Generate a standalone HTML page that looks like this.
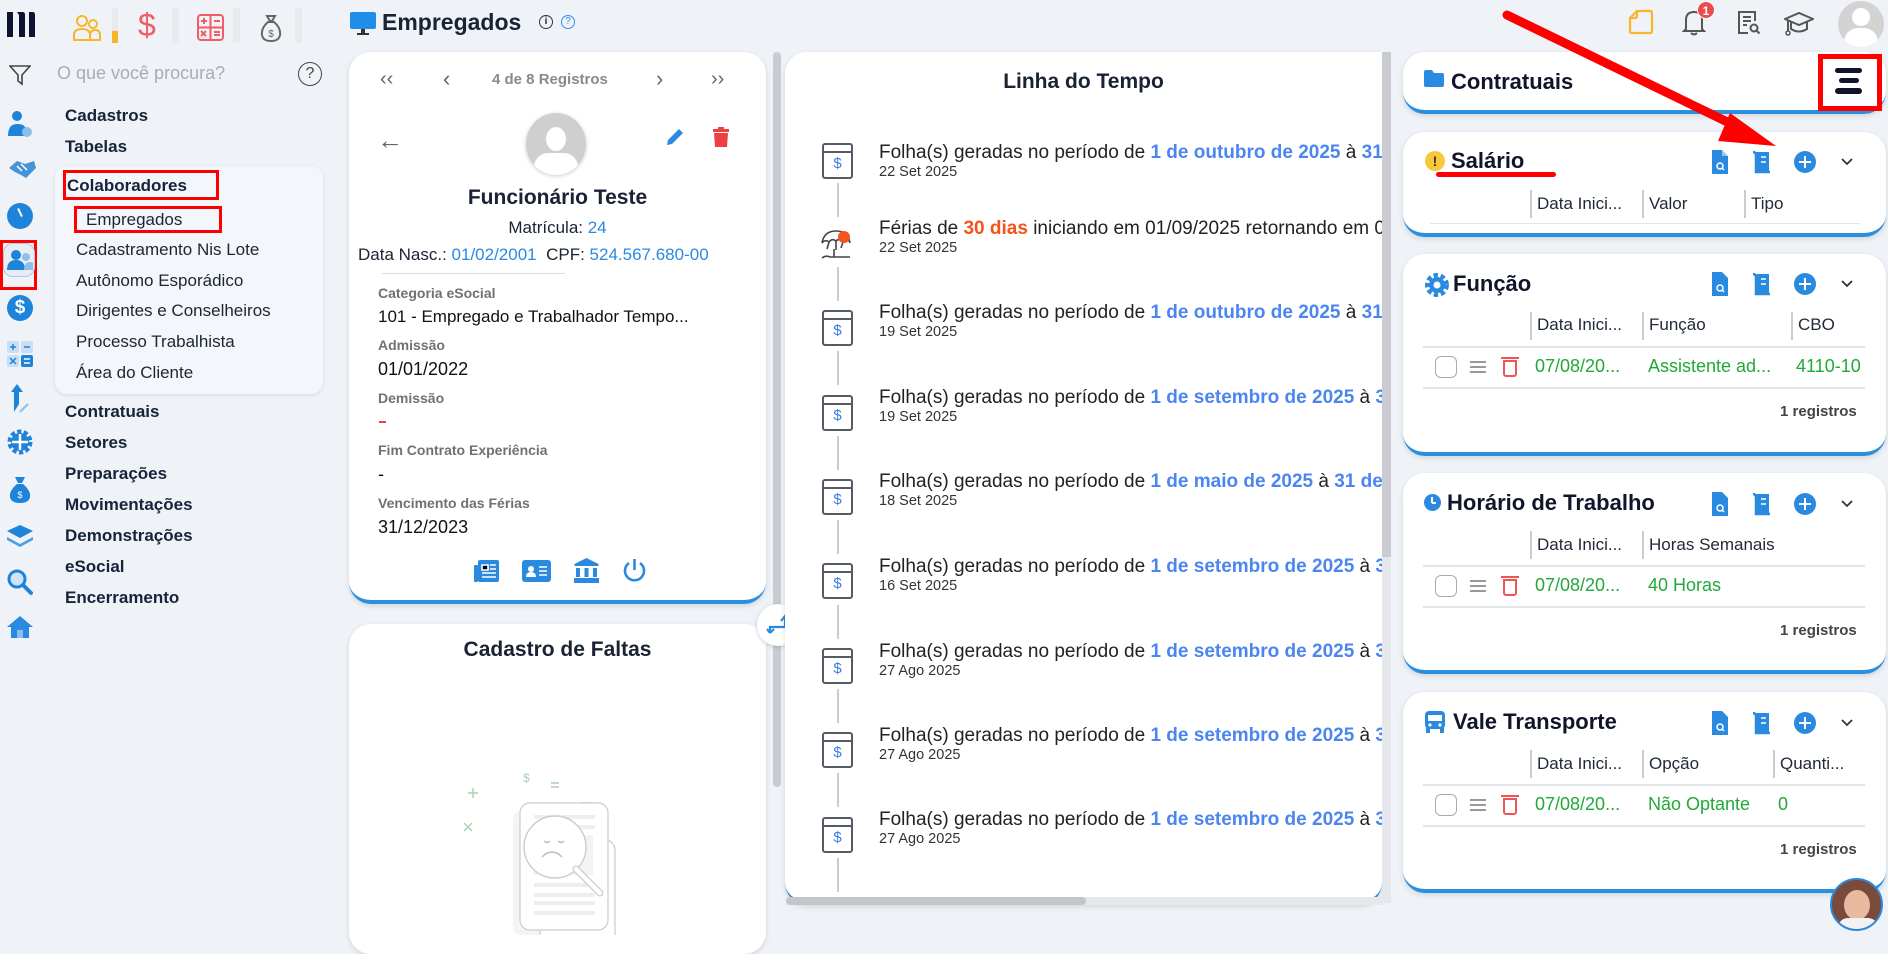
<!DOCTYPE html>
<html><head><meta charset="utf-8">
<style>
*{box-sizing:border-box;margin:0;padding:0}
body{width:1888px;height:933px;overflow:hidden;background:#eff3f8;font-family:"Liberation Sans",sans-serif;color:#1a2233;position:relative}
.a{position:absolute}
.card{position:absolute;background:#fff;border-radius:22px;box-shadow:0 2px 6px rgba(0,0,0,.12);border-bottom:4px solid #2b8fde}
.menu{position:absolute;left:65px;font-weight:bold;font-size:17px;color:#17233a}
.sub{position:absolute;left:76px;font-size:17px;color:#1d2535}
.lbl{position:absolute;left:378px;font-size:14px;font-weight:bold;color:#6e7176}
.val{position:absolute;left:378px;font-size:18px;color:#111}
.ti{position:absolute;left:879px;font-size:19px;color:#222;white-space:nowrap}
.ti b{color:#4b86f0}
.td{position:absolute;left:879px;font-size:14.5px;color:#333}
.ticon{position:absolute;left:822px;width:31px;height:36px;border:2px solid #555c66;border-radius:3px}
.ticon:before{content:"";position:absolute;left:0;right:0;top:6px;border-top:2px solid #555c66}
.ticon:after{content:"$";position:absolute;left:0;right:0;top:10px;text-align:center;color:#3a7de0;font-size:15px}
.tline{position:absolute;left:837px;width:2px;background:#ccc}
.ct{position:absolute;font-weight:bold;font-size:22px;color:#111529}
.hd{position:absolute;font-size:17px;color:#222a38}
.vs{position:absolute;width:2px;height:28px;background:#ccc}
.hl{position:absolute;left:1423px;width:1445px;height:2px;background:#e2e4e8;width:442px}
.gr{position:absolute;font-size:18px;color:#22a83a}
.reg{position:absolute;right:24px;font-size:15px;font-weight:bold;color:#444}
.chk{position:absolute;left:1435px;width:22px;height:22px;border:1.5px solid #aaa;border-radius:6px}
.ham{position:absolute;left:1470px;width:16px;height:12px;border-top:2px solid #999;border-bottom:2px solid #999}
.ham:after{content:"";position:absolute;left:0;right:0;top:3px;border-top:2px solid #999}
.trash{position:absolute;left:1503px;width:14px;height:17px;border:2px solid #f05555;border-radius:0 0 3px 3px}
.trash:before{content:"";position:absolute;left:-4px;right:-4px;top:-5px;border-top:2px solid #f05555}
</style></head><body>

<!-- top bar -->
<svg class="a" style="left:5px;top:10px" width="32" height="32" viewBox="0 0 32 32"><path d="M2 2h6v25H2zM12 2h6q2 0 2 3v22h-6V5zM24 2h4q2 0 2 3v22h-6z" fill="#0e1333"/></svg>
<svg class="a" style="left:72px;top:14px" width="30" height="28" viewBox="0 0 30 28"><g fill="none" stroke="#f9b52a" stroke-width="2"><circle cx="10" cy="7" r="5"/><circle cx="21" cy="10" r="4"/><path d="M2 26v-5q0-6 8-6t8 6v5zM18 26v-4q0-6 5-6t5 5v5z"/></g></svg>
<div class="a" style="left:112px;top:31px;width:6px;height:12px;background:#f9b52a"></div>
<div class="a" style="left:112px;top:8px;width:6px;height:23px;background:#e8eaee"></div>
<div class="a" style="left:138px;top:8px;font-size:32px;color:#f25c66;line-height:34px">$</div>
<div class="a" style="left:172px;top:8px;width:7px;height:35px;background:#e8eaee"></div>
<svg class="a" style="left:197px;top:14px" width="27" height="27" viewBox="0 0 27 27"><rect x="1" y="1" width="25" height="25" rx="3" fill="none" stroke="#f25c66" stroke-width="2"/><path d="M13.5 1v25M1 13.5h25M4 7h6M7 4v6M17 7h6M4 17l5 5M9 17l-5 5M17 18h6M17 21h6" stroke="#f25c66" stroke-width="2"/></svg>
<div class="a" style="left:233px;top:8px;width:7px;height:35px;background:#e8eaee"></div>
<svg class="a" style="left:260px;top:14px" width="22" height="28" viewBox="0 0 22 28"><path d="M7 2h8l-3 5h-2zM8 8q-7 6-6 13 1 6 9 6t9-6q1-7-6-13z" fill="none" stroke="#666" stroke-width="2"/><text x="11" y="23" font-size="10" text-anchor="middle" fill="#666">$</text></svg>
<div class="a" style="left:295px;top:8px;width:7px;height:35px;background:#e8eaee"></div>

<svg class="a" style="left:350px;top:12px" width="26" height="24" viewBox="0 0 26 24"><rect x="0" y="0" width="26" height="17" rx="2" fill="#1e8ee8"/><rect x="11" y="17" width="4" height="5" fill="#333"/><rect x="7" y="21" width="12" height="2" fill="#333"/></svg>
<div class="a" style="left:382px;top:9px;font-size:23px;font-weight:bold;color:#1a2233">Empregados</div>
<div class="a" style="left:539px;top:15px;width:14px;height:14px;border:1.5px solid #333;border-radius:50%;font-size:10px;text-align:center;line-height:11px;font-weight:bold">i</div>
<div class="a" style="left:561px;top:15px;width:14px;height:14px;border:1.5px solid #3a8ee8;border-radius:50%;font-size:10px;text-align:center;line-height:11px;color:#3a8ee8">?</div>

<!-- top right -->
<svg class="a" style="left:1628px;top:9px" width="26" height="26" viewBox="0 0 26 26"><path d="M9 2h13q2 0 2 2v18q0 2-2 2H4q-2 0-2-2V9z" fill="none" stroke="#f9b52a" stroke-width="2.2"/><path d="M9 2v5q0 2-2 2H2" fill="none" stroke="#f9b52a" stroke-width="2.2"/></svg>
<svg class="a" style="left:1682px;top:9px" width="24" height="27" viewBox="0 0 24 27"><path d="M4 20v-9q0-8 8-8t8 8v9l2 2H2zM9 24q3 3 6 0" fill="none" stroke="#555" stroke-width="2"/></svg>
<div class="a" style="left:1697px;top:1px;width:18px;height:18px;border-radius:50%;background:#ef4a4a;color:#fff;font-size:12px;text-align:center;line-height:18px;font-weight:bold;border:1.5px solid #fff">1</div>
<svg class="a" style="left:1736px;top:9px" width="26" height="27" viewBox="0 0 26 27"><path d="M19 12V3H3v21h9" fill="none" stroke="#555" stroke-width="2"/><path d="M7 8h8M7 12h8M7 16h4" stroke="#555" stroke-width="2"/><circle cx="18" cy="19" r="3.5" fill="none" stroke="#555" stroke-width="2"/><path d="M20.5 21.5l3 3" stroke="#555" stroke-width="2"/></svg>
<svg class="a" style="left:1784px;top:11px" width="30" height="25" viewBox="0 0 30 25"><path d="M1 8l14-6 14 6-14 6zM7 11v7q8 5 16 0v-7M4 9v11" fill="none" stroke="#555" stroke-width="2"/><circle cx="4" cy="22" r="2" fill="none" stroke="#555" stroke-width="1.5"/></svg>
<div class="a" style="left:1838px;top:1px;width:46px;height:46px;border-radius:50%;background:#d3d3d3;overflow:hidden"><div class="a" style="left:14px;top:7px;width:18px;height:18px;border-radius:50%;background:#fff"></div><div class="a" style="left:6px;top:27px;width:34px;height:24px;border-radius:14px 14px 0 0;background:#fff"></div></div>

<!-- search row -->
<svg class="a" style="left:9px;top:64px" width="22" height="22" viewBox="0 0 22 22"><path d="M1 2h20l-8 9v9l-4-3v-6z" fill="none" stroke="#444" stroke-width="1.6"/></svg>
<div class="a" style="left:57px;top:63px;font-size:18px;color:#a9adb3">O que você procura?</div>
<div class="a" style="left:298px;top:62px;width:24px;height:24px;border:1.6px solid #444;border-radius:50%;font-size:16px;text-align:center;line-height:21px;color:#444">?</div>

<!-- left icons -->
<svg class="a" style="left:6px;top:110px" width="30" height="30"><circle cx="11" cy="6" r="5" fill="#1e84da"/><path d="M2 26q0-12 9-12t8 5v7z" fill="#1e84da"/><circle cx="21" cy="22" r="5" fill="#8cbfe9"/></svg>
<svg class="a" style="left:7px;top:158px" width="30" height="24"><path d="M2 10l8-7 8 3 9-3 2 7-10 10-5-3-6-3z" fill="#4595d8"/><path d="M10 8l5 5M14 6l6 6" stroke="#fff" stroke-width="1.5"/></svg>
<div class="a" style="left:7px;top:203px;width:26px;height:26px;border-radius:50%;background:#1e84da"><div class="a" style="left:12px;top:5px;width:2px;height:9px;background:#fff;transform:rotate(-25deg)"></div></div>
<div class="a" style="left:0;top:240px;width:37px;height:50px;border:3px solid #f00"></div>
<div class="a" style="left:3px;top:243px;width:32px;height:34px;border-radius:10px;background:#e8edf4;border:1px solid #a8c8ec"></div>
<svg class="a" style="left:7px;top:249px" width="26" height="22"><circle cx="9" cy="6" r="5" fill="#1e84da"/><path d="M0 21q0-10 9-10t9 10z" fill="#1e84da"/><circle cx="19" cy="8" r="4" fill="#8cbfe9"/><path d="M17 21q0-8 6-8t3 8z" fill="#8cbfe9"/></svg>
<div class="a" style="left:7px;top:295px;width:26px;height:26px;border-radius:50%;background:#1e84da;color:#fff;font-size:19px;text-align:center;line-height:26px;font-weight:bold">$</div>
<svg class="a" style="left:7px;top:341px" width="26" height="26"><rect x="0" y="0" width="12" height="12" rx="2" fill="#c9dff5"/><rect x="14" y="0" width="12" height="12" rx="2" fill="#c9dff5"/><rect x="0" y="14" width="12" height="12" rx="2" fill="#c9dff5"/><rect x="14" y="14" width="12" height="12" rx="2" fill="#1e84da"/><path d="M3 6h6M6 3v6M17 6h6M3 17l6 6M9 17l-6 6M17 18h6M17 22h6" stroke="#1e84da" stroke-width="1.5"/><path d="M17 18h6M17 22h6" stroke="#fff" stroke-width="1.5"/></svg>
<svg class="a" style="left:10px;top:384px" width="20" height="30"><path d="M7 0l6 8h-4v12l-5 8V8H1z" fill="#1e84da"/><path d="M10 28l8-8" stroke="#8cbfe9" stroke-width="2"/></svg>
<svg class="a" style="left:6px;top:428px" width="28" height="28"><circle cx="14" cy="14" r="10" fill="none" stroke="#1e84da" stroke-width="5" stroke-dasharray="4 2.3"/><circle cx="14" cy="14" r="9" fill="#1e84da"/><path d="M14 6v16M6 14h16" stroke="#fff" stroke-width="2.5"/></svg>
<svg class="a" style="left:9px;top:476px" width="22" height="28"><path d="M6 1h10l-3 6H9zM8 8q-8 7-7 13 1 6 10 6t10-6q1-6-7-13z" fill="#1e84da"/><text x="11" y="22" font-size="9" text-anchor="middle" fill="#fff">$</text></svg>
<svg class="a" style="left:6px;top:525px" width="28" height="22"><path d="M14 0l13 6-13 7L1 6z" fill="#1e84da"/><path d="M1 12l13 7 13-7v3l-13 7-13-7z" fill="#4aa0e6"/></svg>
<svg class="a" style="left:6px;top:568px" width="28" height="28"><circle cx="11" cy="11" r="8" fill="#cfe4f7" stroke="#1e84da" stroke-width="3"/><path d="M17 17l8 8" stroke="#1e84da" stroke-width="4" stroke-linecap="round"/></svg>
<svg class="a" style="left:6px;top:615px" width="28" height="24"><path d="M14 1L1 12h4v11h18V12h4z" fill="#2a8ae0"/><rect x="11" y="15" width="6" height="8" fill="#8cbfe9"/></svg>

<!-- menu -->
<div class="menu" style="top:106px">Cadastros</div>
<div class="menu" style="top:137px">Tabelas</div>
<div class="a" style="left:55px;top:166px;width:268px;height:228px;background:#f3f6fa;border-radius:12px;box-shadow:0 1px 4px rgba(0,0,0,.1)"></div>
<div class="menu" style="top:176px;left:67px">Colaboradores</div>
<div class="a" style="left:63px;top:170px;width:156px;height:30px;border:3px solid #f00"></div>
<div class="sub" style="top:210px;left:86px">Empregados</div>
<div class="a" style="left:74px;top:206px;width:148px;height:27px;border:3px solid #f00"></div>
<div class="sub" style="top:240px">Cadastramento Nis Lote</div>
<div class="sub" style="top:271px">Autônomo Esporádico</div>
<div class="sub" style="top:301px">Dirigentes e Conselheiros</div>
<div class="sub" style="top:332px">Processo Trabalhista</div>
<div class="sub" style="top:363px">Área do Cliente</div>
<div class="menu" style="top:402px">Contratuais</div>
<div class="menu" style="top:433px">Setores</div>
<div class="menu" style="top:464px">Preparações</div>
<div class="menu" style="top:495px">Movimentações</div>
<div class="menu" style="top:526px">Demonstrações</div>
<div class="menu" style="top:557px">eSocial</div>
<div class="menu" style="top:588px">Encerramento</div>

<!-- card 1 -->
<div class="card" style="left:349px;top:52px;width:417px;height:552px"></div>
<div class="a" style="left:380px;top:68px;font-size:20px;color:#666">&lsaquo;&lsaquo;</div>
<div class="a" style="left:443px;top:66px;font-size:22px;color:#666">&lsaquo;</div>
<div class="a" style="left:492px;top:71px;font-size:15px;font-weight:bold;color:#8a8a8a">4 de 8 Registros</div>
<div class="a" style="left:656px;top:66px;font-size:22px;color:#666">&rsaquo;</div>
<div class="a" style="left:711px;top:68px;font-size:20px;color:#666">&rsaquo;&rsaquo;</div>
<div class="a" style="left:377px;top:125px;font-size:26px;color:#666">&larr;</div>
<div class="a" style="left:526px;top:113px;width:60px;height:62px;border-radius:50%;background:#cfcfcf;box-shadow:0 1px 4px rgba(0,0,0,.2);overflow:hidden"><div class="a" style="left:20px;top:14px;width:20px;height:24px;border-radius:50%;background:#fff"></div><div class="a" style="left:8px;top:40px;width:44px;height:30px;border-radius:14px 14px 0 0;background:#fff"></div></div>
<svg class="a" style="left:665px;top:127px" width="20" height="20"><path d="M2 18l1-5L14 2l4 4L7 17z" fill="#2a8ae0"/></svg>
<svg class="a" style="left:713px;top:127px" width="16" height="20"><rect x="0" y="2" width="16" height="3" fill="#ef4040"/><rect x="5" y="0" width="6" height="3" fill="#ef4040"/><path d="M1 6h14l-1 14H2z" fill="#ef4040"/></svg>
<div class="a" style="left:349px;top:186px;width:417px;text-align:center;font-size:21px;font-weight:bold;color:#1a2233">Funcionário Teste</div>
<div class="a" style="left:349px;top:218px;width:417px;text-align:center;font-size:17px">Matrícula: <span style="color:#2a8ae0">24</span></div>
<div class="a" style="left:358px;top:245px;font-size:17px;white-space:nowrap">Data Nasc.: <span style="color:#2a8ae0">01/02/2001</span>&nbsp; CPF: <span style="color:#2a8ae0">524.567.680-00</span></div>
<div class="a" style="left:382px;top:273px;width:183px;height:1px;background:#ddd"></div>
<div class="lbl" style="top:285px">Categoria eSocial</div>
<div class="val" style="top:307px;font-size:17px">101 - Empregado e Trabalhador Tempo...</div>
<div class="lbl" style="top:337px">Admissão</div>
<div class="val" style="top:359px">01/01/2022</div>
<div class="lbl" style="top:390px">Demissão</div>
<div class="a" style="left:379px;top:421px;width:7px;height:2px;background:#ef4040"></div>
<div class="lbl" style="top:442px">Fim Contrato Experiência</div>
<div class="val" style="top:464px">-</div>
<div class="lbl" style="top:495px">Vencimento das Férias</div>
<div class="val" style="top:517px">31/12/2023</div>
<svg class="a" style="left:474px;top:559px" width="26" height="24"><rect x="4" y="1" width="21" height="22" rx="2" fill="#2a8ae0"/><rect x="0" y="6" width="4" height="17" rx="1" fill="#2a8ae0"/><path d="M8 6h6v5H8zM16 6h6M16 10h6M8 14h14M8 18h14" stroke="#fff" stroke-width="1.6"/></svg>
<svg class="a" style="left:522px;top:560px" width="29" height="22"><rect x="0" y="0" width="29" height="22" rx="3" fill="#2a8ae0"/><circle cx="9" cy="9" r="3" fill="#fff"/><path d="M4 17q0-5 5-5t5 5z" fill="#fff"/><path d="M17 7h8M17 11h8M17 15h8" stroke="#fff" stroke-width="1.6"/></svg>
<svg class="a" style="left:574px;top:558px" width="25" height="25"><path d="M12.5 0l12 6v2H.5V6z" fill="#2a8ae0"/><rect x="2" y="10" width="4" height="9" fill="#2a8ae0"/><rect x="10.5" y="10" width="4" height="9" fill="#2a8ae0"/><rect x="19" y="10" width="4" height="9" fill="#2a8ae0"/><rect x="0" y="20" width="25" height="5" fill="#2a8ae0"/></svg>
<svg class="a" style="left:622px;top:558px" width="25" height="25"><path d="M7 5a9.5 9.5 0 1 0 11 0" fill="none" stroke="#2a8ae0" stroke-width="2.6"/><path d="M12.5 1v11" stroke="#2a8ae0" stroke-width="2.6"/></svg>

<!-- card 2 -->
<div class="card" style="left:349px;top:624px;width:417px;height:330px;border-bottom:none"></div>
<div class="a" style="left:349px;top:638px;width:417px;text-align:center;font-size:21px;font-weight:bold;color:#1a2233">Cadastro de Faltas</div>
<svg class="a" style="left:460px;top:725px" width="180" height="210" viewBox="0 0 180 210"><g fill="none" stroke="#a8d0b0" stroke-width="1.4"><path d="M8 68h10M13 63v10M4 98l8 8M12 98l-8 8M136 171h10M141 166v10M120 78h10M91 58h8M91 62h8M73 103l6 6"/></g><text x="63" y="57" font-size="12" fill="#a8d0b0">$</text><rect x="53" y="85" width="88" height="127" rx="10" fill="#f4f4f4"/><rect x="80" y="115" width="75" height="110" rx="10" fill="#fff" stroke="#ccc" stroke-width="1.2"/><rect x="60" y="78" width="88" height="127" rx="10" fill="#fff" stroke="#ccc" stroke-width="1.2"/><g stroke="#eee" stroke-width="4"><path d="M74 92h61M74 102h61M74 160h61M74 170h61M74 178h61M74 188h61"/></g><rect x="73" y="110" width="60" height="40" fill="#f3f3f3"/><circle cx="95" cy="122" r="31" fill="#fff" stroke="#ccc" stroke-width="1.4"/><path d="M116 144l24 24" stroke="#ccc" stroke-width="7" stroke-linecap="round"/><path d="M116 144l24 24" stroke="#fff" stroke-width="4.5" stroke-linecap="round"/><path d="M82 132q10-10 20 0M84 116q3 3 6 0M98 116q3 3 6 0" stroke="#bbb" stroke-width="1.3" fill="none"/></svg>
<div class="a" style="left:773px;top:52px;width:8px;height:735px;background:#c9cbd0;border-radius:4px"></div>
<div class="a" style="left:757px;top:604px;width:42px;height:42px;border-radius:50%;background:#fff;box-shadow:0 1px 5px rgba(0,0,0,.18)"></div>
<svg class="a" style="left:766px;top:613px" width="24" height="24"><path d="M4 20v-6h15V4M15 8l4-5 4 5M4 20l-3-4M4 20l4-4" fill="none" stroke="#2a8ae0" stroke-width="2.2"/></svg>

<!-- timeline card -->
<div class="card" style="left:785px;top:52px;width:597px;height:853px;border-radius:22px 0 22px 22px"></div>
<div class="a" style="left:1382px;top:52px;width:9px;height:505px;background:#c9cbd0"></div>
<div class="a" style="left:1382px;top:557px;width:9px;height:346px;background:#e6e7ea"></div>
<div class="a" style="left:786px;top:897px;width:596px;height:8px;background:#e6e7ea"></div>
<div class="a" style="left:786px;top:897px;width:300px;height:8px;background:#c4c5c9;border-radius:4px"></div>
<div class="a" style="left:785px;top:70px;width:597px;text-align:center;font-size:21px;font-weight:bold;color:#1a2233">Linha do Tempo</div>
<div style="position:absolute;left:785px;top:52px;width:597px;height:845px;overflow:hidden">
<div style="position:absolute;left:-785px;top:-52px;width:1888px;height:933px">
<div class="ticon" style="top:143px"></div><div class="tline" style="top:183px;height:34px"></div>
<div class="ti" style="top:142px">Folha(s) geradas no período de <b>1 de outubro de 2025</b> à <b>31 de outubro de 2025</b></div><div class="td" style="top:164px">22 Set 2025</div>
<svg class="a" style="left:820px;top:227px" width="34" height="32"><path d="M2 16q2-12 14-12t14 12M2 16q3-4 7-1 3-4 7-1 3-3 7 0 3-3 7 1M9 15l-2 7M16 14v9M23 15l-2 6M14 22v8M2 31q4-3 8-1h20" fill="none" stroke="#444" stroke-width="1.6"/><circle cx="24" cy="10" r="6" fill="#f2541b"/></svg>
<div class="tline" style="top:267px;height:34px"></div>
<div class="ti" style="top:218px">Férias de <b style="color:#f2541b">30 dias</b> iniciando em 01/09/2025 retornando em 01/10/2025</div><div class="td" style="top:240px">22 Set 2025</div>
<div class="ticon" style="top:310px"></div><div class="tline" style="top:351px;height:34px"></div>
<div class="ti" style="top:302px">Folha(s) geradas no período de <b>1 de outubro de 2025</b> à <b>31 de outubro de 2025</b></div><div class="td" style="top:324px">19 Set 2025</div>
<div class="ticon" style="top:395px"></div><div class="tline" style="top:436px;height:34px"></div>
<div class="ti" style="top:387px">Folha(s) geradas no período de <b>1 de setembro de 2025</b> à <b>30 de setembro</b></div><div class="td" style="top:409px">19 Set 2025</div>
<div class="ticon" style="top:479px"></div><div class="tline" style="top:520px;height:34px"></div>
<div class="ti" style="top:471px">Folha(s) geradas no período de <b>1 de maio de 2025</b> à <b>31 de maio de 2025</b></div><div class="td" style="top:493px">18 Set 2025</div>
<div class="ticon" style="top:563px"></div><div class="tline" style="top:605px;height:34px"></div>
<div class="ti" style="top:556px">Folha(s) geradas no período de <b>1 de setembro de 2025</b> à <b>30 de setembro</b></div><div class="td" style="top:578px">16 Set 2025</div>
<div class="ticon" style="top:648px"></div><div class="tline" style="top:689px;height:34px"></div>
<div class="ti" style="top:641px">Folha(s) geradas no período de <b>1 de setembro de 2025</b> à <b>30 de setembro</b></div><div class="td" style="top:663px">27 Ago 2025</div>
<div class="ticon" style="top:732px"></div><div class="tline" style="top:773px;height:34px"></div>
<div class="ti" style="top:725px">Folha(s) geradas no período de <b>1 de setembro de 2025</b> à <b>30 de setembro</b></div><div class="td" style="top:747px">27 Ago 2025</div>
<div class="ticon" style="top:817px"></div><div class="tline" style="top:858px;height:34px"></div>
<div class="ti" style="top:809px">Folha(s) geradas no período de <b>1 de setembro de 2025</b> à <b>30 de setembro</b></div><div class="td" style="top:831px">27 Ago 2025</div>
</div></div>

<!-- right cards -->
<div class="card" style="left:1403px;top:52px;width:483px;height:62px"></div>
<svg class="a" style="left:1424px;top:70px" width="20" height="17"><path d="M0 2q0-2 2-2h6l2 3h8q2 0 2 2v10q0 2-2 2H2q-2 0-2-2z" fill="#2a8ae0"/></svg>
<div class="ct" style="left:1451px;top:69px">Contratuais</div>
<div class="a" style="left:1818px;top:54px;width:64px;height:57px;border:5px solid #f00"></div>
<div class="a" style="left:1835px;top:68px;width:27px;height:5px;background:#10132e;border-radius:3px"></div>
<div class="a" style="left:1839px;top:78px;width:20px;height:5px;background:#10132e;border-radius:3px"></div>
<div class="a" style="left:1835px;top:88px;width:27px;height:6px;background:#10132e;border-radius:3px"></div>

<!-- salário -->
<div class="card" style="left:1403px;top:132px;width:483px;height:105px"></div>
<div class="a" style="left:1425px;top:151px;width:20px;height:20px;border-radius:50%;background:#f9c83a;text-align:center;font-weight:bold;font-size:14px;line-height:20px;color:#333">!</div>
<div class="ct" style="left:1451px;top:148px">Salário</div>
<div class="a" style="left:1436px;top:172px;width:120px;height:5px;background:#f00;border-radius:3px"></div>

<!-- header icons template -->
<svg class="a" style="left:1710px;top:150px" width="160" height="26"><path d="M2 0h10l6 6v18H2z" fill="#2a8ae0"/><path d="M12 0v6h6" fill="#fff" opacity=".5"/><circle cx="10" cy="16" r="3" fill="none" stroke="#fff" stroke-width="1.5"/><path d="M12 18l2 2" stroke="#fff" stroke-width="1.5"/><path d="M45 2h14v20H47z" fill="#2a8ae0"/><path d="M43 2q3 0 3 4v16h14M50 8h6M50 13h6M50 17h6" fill="none" stroke="#2a8ae0" stroke-width="2.5"/><path d="M51 7h5M51 12h5" stroke="#fff" stroke-width="1.5"/><circle cx="95" cy="12" r="11" fill="#2a8ae0"/><path d="M95 6v12M89 12h12" stroke="#fff" stroke-width="2"/><path d="M132 9l5 5 5-5" fill="none" stroke="#333" stroke-width="1.8"/></svg>
<div class="vs" style="left:1530px;top:190px"></div><div class="hd" style="left:1537px;top:194px">Data Inici...</div>
<div class="vs" style="left:1642px;top:190px"></div><div class="hd" style="left:1649px;top:194px">Valor</div>
<div class="vs" style="left:1744px;top:190px"></div><div class="hd" style="left:1751px;top:194px">Tipo</div>
<div class="hl" style="top:223px;left:1430px;width:430px;height:1px"></div>

<!-- função -->
<div class="card" style="left:1403px;top:254px;width:483px;height:202px"></div>
<svg class="a" style="left:1422px;top:270px" width="28" height="28"><circle cx="15" cy="15" r="9" fill="none" stroke="#2a8ae0" stroke-width="6" stroke-dasharray="4 2.5"/><circle cx="15" cy="15" r="8" fill="#2a8ae0"/><circle cx="15" cy="15" r="3.5" fill="#fff"/></svg>
<div class="ct" style="left:1453px;top:271px">Função</div>
<svg class="a" style="left:1710px;top:272px" width="160" height="26"><path d="M2 0h10l6 6v18H2z" fill="#2a8ae0"/><circle cx="10" cy="16" r="3" fill="none" stroke="#fff" stroke-width="1.5"/><path d="M12 18l2 2" stroke="#fff" stroke-width="1.5"/><path d="M45 2h14v20H47z" fill="#2a8ae0"/><path d="M43 2q3 0 3 4v16h14" fill="none" stroke="#2a8ae0" stroke-width="2.5"/><path d="M51 7h5M51 12h5" stroke="#fff" stroke-width="1.5"/><circle cx="95" cy="12" r="11" fill="#2a8ae0"/><path d="M95 6v12M89 12h12" stroke="#fff" stroke-width="2"/><path d="M132 9l5 5 5-5" fill="none" stroke="#333" stroke-width="1.8"/></svg>
<div class="vs" style="left:1530px;top:312px"></div><div class="hd" style="left:1537px;top:315px">Data Inici...</div>
<div class="vs" style="left:1642px;top:312px"></div><div class="hd" style="left:1649px;top:315px">Função</div>
<div class="vs" style="left:1791px;top:312px"></div><div class="hd" style="left:1798px;top:315px">CBO</div>
<div class="hl" style="top:346px"></div>
<div class="chk" style="top:356px"></div><div class="ham" style="top:361px"></div><div class="trash" style="top:360px"></div>
<div class="gr" style="left:1535px;top:356px">07/08/20...</div><div class="gr" style="left:1648px;top:356px">Assistente ad...</div><div class="gr" style="left:1796px;top:356px">4110-10</div>
<div class="hl" style="top:387px"></div>
<div class="reg" style="left:1780px;top:403px">1 registros</div>

<!-- horário -->
<div class="card" style="left:1403px;top:473px;width:483px;height:201px"></div>
<div class="a" style="left:1424px;top:494px;width:17px;height:17px;border-radius:50%;background:#2a8ae0"><div class="a" style="left:7px;top:3px;width:2px;height:6px;background:#fff"></div><div class="a" style="left:8px;top:8px;width:4px;height:2px;background:#fff"></div></div>
<div class="ct" style="left:1447px;top:490px">Horário de Trabalho</div>
<svg class="a" style="left:1710px;top:492px" width="160" height="26"><path d="M2 0h10l6 6v18H2z" fill="#2a8ae0"/><circle cx="10" cy="16" r="3" fill="none" stroke="#fff" stroke-width="1.5"/><path d="M12 18l2 2" stroke="#fff" stroke-width="1.5"/><path d="M45 2h14v20H47z" fill="#2a8ae0"/><path d="M43 2q3 0 3 4v16h14" fill="none" stroke="#2a8ae0" stroke-width="2.5"/><path d="M51 7h5M51 12h5" stroke="#fff" stroke-width="1.5"/><circle cx="95" cy="12" r="11" fill="#2a8ae0"/><path d="M95 6v12M89 12h12" stroke="#fff" stroke-width="2"/><path d="M132 9l5 5 5-5" fill="none" stroke="#333" stroke-width="1.8"/></svg>
<div class="vs" style="left:1530px;top:531px"></div><div class="hd" style="left:1537px;top:535px">Data Inici...</div>
<div class="vs" style="left:1642px;top:531px"></div><div class="hd" style="left:1649px;top:535px">Horas Semanais</div>
<div class="hl" style="top:565px"></div>
<div class="chk" style="top:575px"></div><div class="ham" style="top:580px"></div><div class="trash" style="top:579px"></div>
<div class="gr" style="left:1535px;top:575px">07/08/20...</div><div class="gr" style="left:1648px;top:575px">40 Horas</div>
<div class="hl" style="top:606px"></div>
<div class="reg" style="left:1780px;top:622px">1 registros</div>

<!-- vale -->
<div class="card" style="left:1403px;top:692px;width:483px;height:201px"></div>
<svg class="a" style="left:1425px;top:711px" width="20" height="23"><rect x="0" y="0" width="20" height="18" rx="4" fill="#2a8ae0"/><rect x="3" y="4" width="14" height="6" fill="#fff"/><circle cx="5" cy="14" r="1.6" fill="#fff"/><circle cx="15" cy="14" r="1.6" fill="#fff"/><rect x="1" y="17" width="4" height="5" fill="#2a8ae0"/><rect x="15" y="17" width="4" height="5" fill="#2a8ae0"/></svg>
<div class="ct" style="left:1453px;top:709px">Vale Transporte</div>
<svg class="a" style="left:1710px;top:711px" width="160" height="26"><path d="M2 0h10l6 6v18H2z" fill="#2a8ae0"/><circle cx="10" cy="16" r="3" fill="none" stroke="#fff" stroke-width="1.5"/><path d="M12 18l2 2" stroke="#fff" stroke-width="1.5"/><path d="M45 2h14v20H47z" fill="#2a8ae0"/><path d="M43 2q3 0 3 4v16h14" fill="none" stroke="#2a8ae0" stroke-width="2.5"/><path d="M51 7h5M51 12h5" stroke="#fff" stroke-width="1.5"/><circle cx="95" cy="12" r="11" fill="#2a8ae0"/><path d="M95 6v12M89 12h12" stroke="#fff" stroke-width="2"/><path d="M132 9l5 5 5-5" fill="none" stroke="#333" stroke-width="1.8"/></svg>
<div class="vs" style="left:1530px;top:750px"></div><div class="hd" style="left:1537px;top:754px">Data Inici...</div>
<div class="vs" style="left:1642px;top:750px"></div><div class="hd" style="left:1649px;top:754px">Opção</div>
<div class="vs" style="left:1773px;top:750px"></div><div class="hd" style="left:1780px;top:754px">Quanti...</div>
<div class="hl" style="top:784px"></div>
<div class="chk" style="top:794px"></div><div class="ham" style="top:799px"></div><div class="trash" style="top:798px"></div>
<div class="gr" style="left:1535px;top:794px">07/08/20...</div><div class="gr" style="left:1648px;top:794px">Não Optante</div><div class="gr" style="left:1778px;top:794px">0</div>
<div class="hl" style="top:825px"></div>
<div class="reg" style="left:1780px;top:841px">1 registros</div>

<!-- avatar -->
<div class="a" style="left:1830px;top:878px;width:53px;height:53px;border-radius:50%;border:2.5px solid #2a8ae0;background:#7a4a3a;overflow:hidden"><div class="a" style="left:12px;top:10px;width:26px;height:30px;border-radius:50%;background:#e9b9a0"></div><div class="a" style="left:6px;top:38px;width:40px;height:20px;background:#f2f2f2;border-radius:10px 10px 0 0"></div></div>

<!-- red arrow -->
<svg class="a" style="left:0;top:0" width="1888" height="933" pointer-events="none"><path d="M1507 15L1748 132" stroke="#f00" stroke-width="9" stroke-linecap="round"/><path d="M1776 146L1730 113 1718 141z" fill="#f00"/></svg>
</body></html>
